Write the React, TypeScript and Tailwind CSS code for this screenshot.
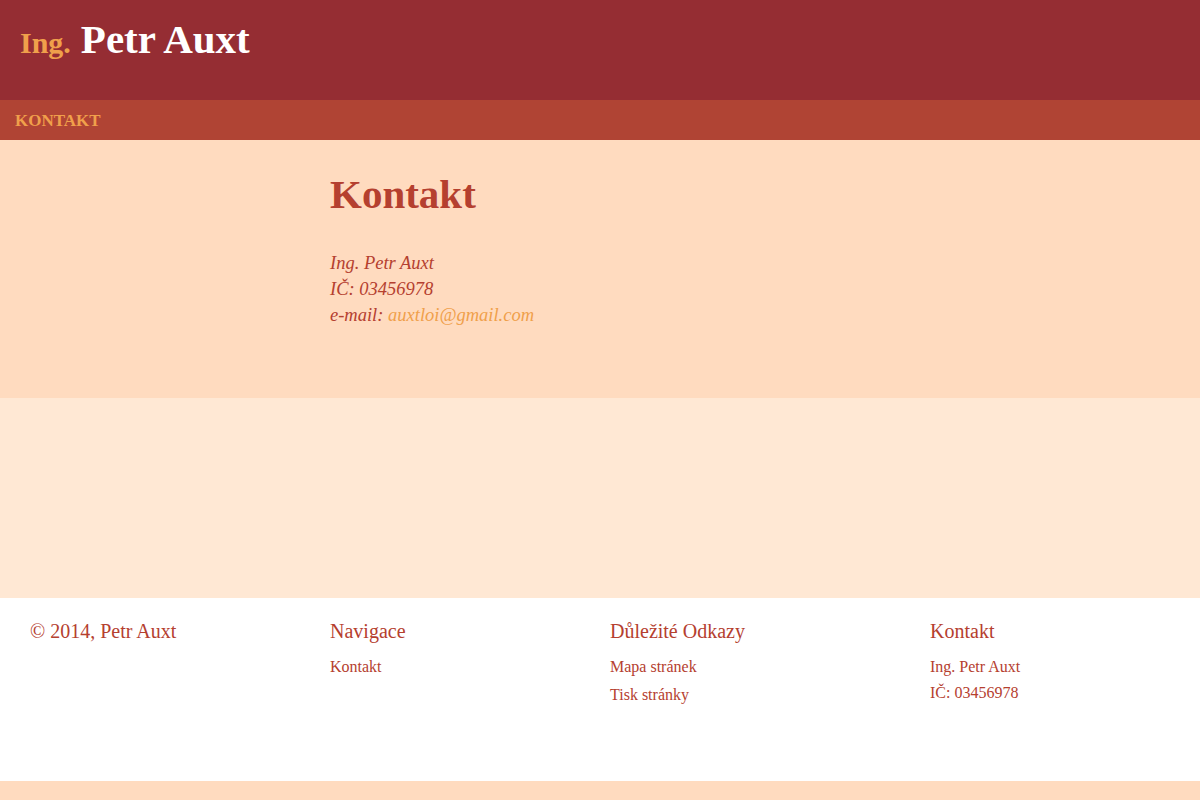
import React from "react";

const serif = { fontFamily: '"Liberation Serif", "Times New Roman", serif' };

function FooterColumn({ title, items, gap }: { title: string; items: string[]; gap: string }) {
  return (
    <div>
      <h3 className="text-[20px] leading-[26px] text-[#b5402f]">{title}</h3>
      <ul className={`mt-[13px] flex flex-col ${gap}`}>
        {items.map((item) => (
          <li key={item} className="text-[16px] leading-[20px] text-[#b5402f]">
            {item}
          </li>
        ))}
      </ul>
    </div>
  );
}

export default function App() {
  return (
    <div className="min-h-[800px] w-full bg-[#ffdbbf]" style={serif}>
      <header className="h-[100px] bg-[#952d33] px-[20px] pt-[15px]">
        <h1 className="flex items-baseline gap-[10px] font-bold">
          <span className="text-[30px] text-[#f0a04b]">Ing.</span>
          <span className="text-[41px] leading-[48px] text-white">Petr Auxt</span>
        </h1>
      </header>

      <nav className="flex h-[40px] items-center bg-[#b04434] px-[15px] pt-[2px]">
        <a className="text-[17px] font-bold text-[#f0a04b]">KONTAKT</a>
      </nav>

      <main className="h-[258px] bg-[#ffdbbf] pl-[330px] pt-[26px]">
        <h2 className="text-[41px] font-bold leading-[56px] text-[#b5402f]">Kontakt</h2>
        <div className="mt-[28px] text-[18.5px] italic leading-[26px] text-[#b5402f]">
          <p>Ing. Petr Auxt</p>
          <p>IČ: 03456978</p>
          <p>
            e-mail: <a className="text-[#f0a04b]">auxtloi@gmail.com</a>
          </p>
        </div>
      </main>

      <div className="h-[200px] bg-[#ffe8d4]" />

      <footer className="grid h-[183px] grid-cols-[300px_280px_320px_1fr] bg-white pl-[30px] pt-[20px]">
        <p className="text-[20px] leading-[26px] text-[#b5402f]">© 2014, Petr Auxt</p>
        <FooterColumn title="Navigace" items={["Kontakt"]} gap="gap-[8px]" />
        <FooterColumn title="Důležité Odkazy" items={["Mapa stránek", "Tisk stránky"]} gap="gap-[8px]" />
        <FooterColumn title="Kontakt" items={["Ing. Petr Auxt", "IČ: 03456978"]} gap="gap-[6px]" />
      </footer>
    </div>
  );
}
